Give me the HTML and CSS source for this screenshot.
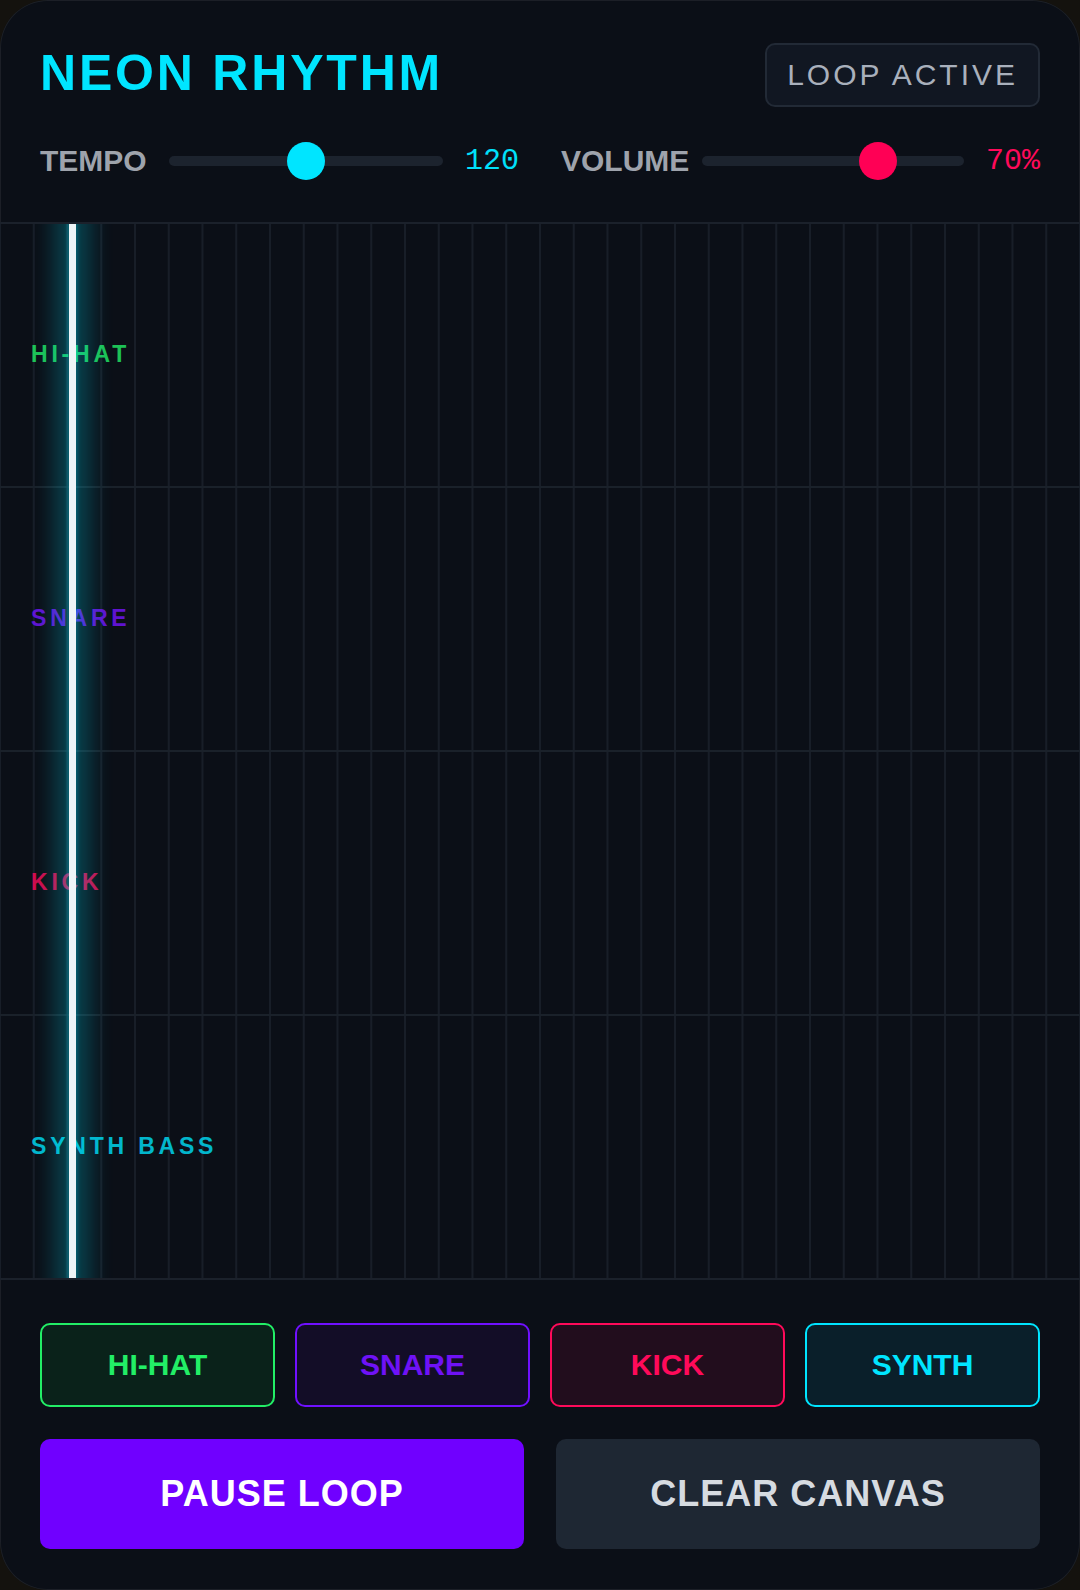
FILE: index.html
```html
<!DOCTYPE html>
<html lang="en">
<head>
<meta charset="utf-8">
<title>Neon Rhythm</title>
<link rel="stylesheet" href="styles.css">
</head>
<body>
<div class="device">
  <header class="top">
    <div class="title-row">
      <h1 class="title">NEON RHYTHM</h1>
      <span class="badge">LOOP ACTIVE</span>
    </div>
    <div class="controls">
      <div class="control">
        <span class="ctl-label">TEMPO</span>
        <input class="slider slider-tempo" type="range" min="60" max="180" value="120">
        <span class="ctl-value value-tempo">120</span>
      </div>
      <div class="control control-volume">
        <span class="ctl-label">VOLUME</span>
        <input class="slider slider-volume" type="range" min="0" max="100" value="70">
        <span class="ctl-value value-volume">70%</span>
      </div>
    </div>
  </header>

  <section class="sequencer">
    <div class="lane"><span class="lane-label lane-hihat">HI-HAT</span></div>
    <div class="lane"><span class="lane-label lane-snare">SNARE</span></div>
    <div class="lane"><span class="lane-label lane-kick">KICK</span></div>
    <div class="lane"><span class="lane-label lane-synth">SYNTH BASS</span></div>
    <div class="playhead"></div>
  </section>

  <footer class="bottom">
    <div class="pads">
      <button class="pad pad-hihat">HI-HAT</button>
      <button class="pad pad-snare">SNARE</button>
      <button class="pad pad-kick">KICK</button>
      <button class="pad pad-synth">SYNTH</button>
    </div>
    <div class="actions">
      <button class="action action-pause">PAUSE LOOP</button>
      <button class="action action-clear">CLEAR CANVAS</button>
    </div>
  </footer>
</div>
</body>
</html>
```
FILE: styles.css
```css
* {
  box-sizing: border-box;
}

html,
body {
  margin: 0;
  padding: 0;
  background: #14120e;
}

body {
  font-family: "Liberation Sans", Arial, sans-serif;
}

.device {
  width: 1080px;
  height: 1590px;
  background: #0b0f17;
  border-radius: 48px;
  overflow: hidden;
  display: flex;
  flex-direction: column;
  box-shadow: inset 0 0 0 1px rgba(255, 255, 255, 0.07);
}

/* ---------- header ---------- */

.top {
  padding: 43px 40px 42px;
}

.title-row {
  display: flex;
  justify-content: space-between;
  align-items: flex-start;
}

.title {
  margin: 2px 0 0;
  font-size: 50px;
  line-height: 57px;
  font-weight: 700;
  letter-spacing: 2.8px;
  color: #00e5ff;
}

.badge {
  height: 64px;
  padding: 0 20px;
  display: flex;
  align-items: center;
  border: 2px solid #222a36;
  border-radius: 10px;
  background: #111722;
  color: #a9b0bc;
  font-size: 30px;
  letter-spacing: 3px;
}

.controls {
  margin-top: 35px;
  height: 38px;
  display: flex;
  gap: 42px;
}

.control {
  flex: 1;
  display: flex;
  align-items: center;
  gap: 22px;
}

.control-volume .ctl-label {
  margin-right: -9px;
}

.ctl-label {
  font-size: 30px;
  font-weight: 700;
  color: #9ea3ac;
}

.ctl-value {
  width: 54px;
  font-family: "Liberation Mono", "Courier New", monospace;
  font-size: 30px;
  white-space: nowrap;
}

.value-tempo {
  color: #00e0fa;
}

.value-volume {
  color: #ff0a5a;
}

.slider {
  -webkit-appearance: none;
  appearance: none;
  flex: 1;
  min-width: 0;
  height: 38px;
  margin: 0;
  background: transparent;
}

.slider::-webkit-slider-runnable-track {
  height: 10px;
  border-radius: 5px;
  background: #1c232e;
}

.slider::-webkit-slider-thumb {
  -webkit-appearance: none;
  width: 38px;
  height: 38px;
  margin-top: -14px;
  border: none;
  border-radius: 50%;
  background: #00e5ff;
}

.slider-volume::-webkit-slider-thumb {
  background: #ff0055;
}

/* ---------- step grid ---------- */

.sequencer {
  position: relative;
  overflow: hidden;
  height: 1060px;
  border-top: 2px solid #1b212b;
  border-bottom: 2px solid #1b212b;
  display: flex;
  flex-direction: column;
  background-color: #0b0f17;
  background-image: linear-gradient(to right, #181e28 0 2px, transparent 2px);
  background-size: 33.75px 100%;
  background-position: 32.75px 0;
}

.lane {
  flex: 1;
  display: flex;
  align-items: center;
  padding: 0 0 2px 31px;
}

.lane + .lane {
  border-top: 2px solid #1a212a;
}

.lane-label {
  font-size: 23px;
  font-weight: 700;
  letter-spacing: 3.8px;
  opacity: 0.8;
}

.lane-hihat { color: #22ee66; }
.lane-snare { color: #7414ff; }
.lane-kick { color: #ff0a5a; }
.lane-synth { color: #00e0fa; }

/* playhead bar with its cyan halo; runs past the grid edges so the
   halo stays even, the grid clips it */
.playhead {
  position: absolute;
  top: -40px;
  bottom: -40px;
  left: 68.5px;
  width: 7px;
  background: #eef5f7;
  box-shadow:
    0 0 4px 1px rgba(0, 229, 255, 0.3),
    0 0 22px 15px rgba(0, 229, 255, 0.24);
}

/* ---------- pads & actions ---------- */

.bottom {
  padding: 43px 40px 41px;
}

.pads {
  display: flex;
  gap: 20px;
}

.pad {
  flex: 1;
  height: 84px;
  border-radius: 10px;
  border: 2px solid;
  font-family: "Liberation Sans", Arial, sans-serif;
  font-size: 30px;
  font-weight: 700;
  padding: 0;
}

.pad-hihat {
  border-color: #22ee66;
  background: #0a221a;
  color: #22ee66;
}

.pad-snare {
  border-color: #7010ff;
  background: #130d27;
  color: #6f12f6;
}

.pad-kick {
  border-color: #ff0a5a;
  background: #220d1d;
  color: #ff0a5a;
}

.pad-synth {
  border-color: #00e5ff;
  background: #0a1f2a;
  color: #00e5ff;
}

.actions {
  margin-top: 32px;
  display: flex;
  gap: 32px;
}

.action {
  flex: 1;
  height: 110px;
  border: none;
  border-radius: 10px;
  font-family: "Liberation Sans", Arial, sans-serif;
  font-size: 36px;
  font-weight: 700;
  letter-spacing: 1px;
  padding: 0;
}

.action-pause {
  background: #7000ff;
  color: #ffffff;
}

.action-clear {
  background: #1e2733;
  color: #d6dbe1;
}
```
